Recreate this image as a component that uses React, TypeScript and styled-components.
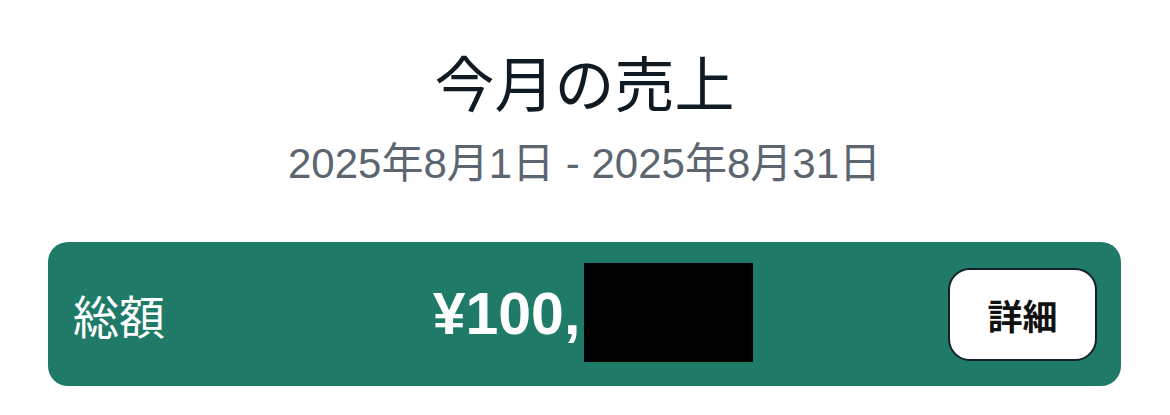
import React from 'react';
import styled, { createGlobalStyle } from 'styled-components';

const GlobalStyle = createGlobalStyle`
  html, body {
    margin: 0;
    padding: 0;
    background: #ffffff;
  }
  body {
    font-family: "Liberation Sans", "Noto Sans CJK JP", sans-serif;
  }
`;

const Page = styled.main`
  width: 1170px;
  height: 415px;
  box-sizing: border-box;
  padding: 50px 49px 0 48px;
  display: flex;
  flex-direction: column;
  align-items: stretch;
`;

const Header = styled.header`
  display: flex;
  flex-direction: column;
  align-items: center;
`;

const Title = styled.h1`
  margin: 0;
  font-size: 60px;
  font-weight: 400;
  line-height: 74px;
  color: #0f1a22;
`;

const Period = styled.p`
  margin: 14px 0 0;
  font-size: 42px;
  line-height: 52px;
  color: #5b6670;
`;

const SummaryCard = styled.section`
  margin-top: 52px;
  height: 144px;
  box-sizing: border-box;
  padding: 0 24px 0 25px;
  border-radius: 20px;
  background: #1f7b67;
  display: grid;
  grid-template-columns: 1fr auto 1fr;
  align-items: center;
`;

const Label = styled.span`
  font-size: 46px;
  color: #ffffff;
  justify-self: start;
`;

const Amount = styled.div`
  display: flex;
  align-items: center;
  margin-left: 16px;
  font-size: 59px;
  font-weight: 700;
  color: #ffffff;
`;

const Redacted = styled.span<{ w: number; h: number }>`
  display: inline-block;
  width: ${(p) => p.w}px;
  height: ${(p) => p.h}px;
  background: #000000;
  margin-left: 4px;
  margin-top: -3px;
`;

const DetailButton = styled.button`
  justify-self: end;
  width: 149px;
  height: 93px;
  box-sizing: border-box;
  border: 2.5px solid #14202a;
  border-radius: 22px;
  background: #ffffff;
  font-family: "Liberation Sans", "Noto Sans CJK JP", sans-serif;
  font-size: 35px;
  font-weight: 700;
  color: #111111;
  cursor: pointer;
`;

const App = () => {
  return (
    <>
      <GlobalStyle />
      <Page>
        <Header>
          <Title>今月の売上</Title>
          <Period>2025年8月1日 - 2025年8月31日</Period>
        </Header>
        <SummaryCard>
          <Label>総額</Label>
          <Amount>
            ¥100,
            <Redacted w={169} h={99} />
          </Amount>
          <DetailButton>詳細</DetailButton>
        </SummaryCard>
      </Page>
    </>
  );
};

export default App;
